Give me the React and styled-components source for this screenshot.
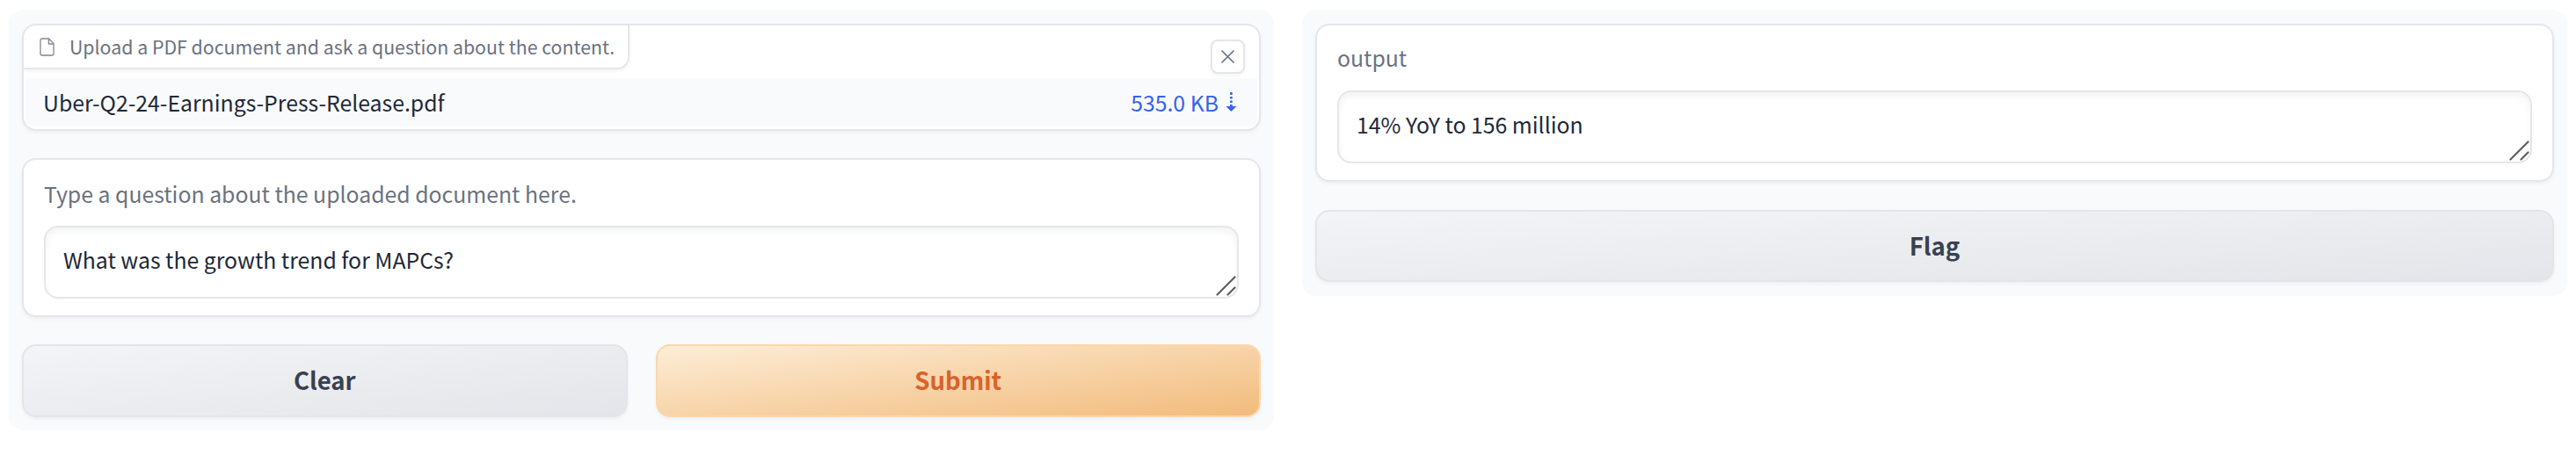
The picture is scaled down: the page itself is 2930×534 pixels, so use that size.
import React from "react";
import styled, { createGlobalStyle, css } from "styled-components";

const colors = {
  panel: "#f9fafc",
  border: "#e5e6eb",
  muted: "#6b7280",
  text: "#1f2937",
  link: "#3563e9",
};

const GlobalStyle = createGlobalStyle`
  *, *::before, *::after { box-sizing: border-box; }
  body {
    margin: 0;
    background: #fff;
    font-family: "Noto Sans CJK SC", "Noto Sans", sans-serif;
    color: ${colors.text};
  }
`;

const Page = styled.main`
  display: flex;
  align-items: flex-start;
  gap: 32px;
  padding: 11px 10px 0;
`;

const Panel = styled.section`
  flex: 1 1 0;
  display: flex;
  flex-direction: column;
  padding: 16px 15px ${(p) => p.$bottom}px;
  border-radius: 16px;
  background: ${colors.panel};
`;

const Card = styled.div`
  overflow: hidden;
  border: 2px solid ${colors.border};
  border-radius: 16px;
  background: #fff;
  box-shadow: 0 2px 4px rgba(0, 0, 0, 0.05);
`;

const FileCard = styled(Card)`
  height: 122px;
  margin-bottom: 31px;
`;

const FileHeader = styled.div`
  display: flex;
  justify-content: space-between;
  align-items: flex-start;
  height: 60px;
  padding-right: 16px;
`;

const FileLabel = styled.div`
  display: flex;
  align-items: center;
  height: 50px;
  padding: 0 15px 0 18px;
  gap: 17px;
  border: solid ${colors.border};
  border-width: 0 2px 2px 0;
  border-radius: 0 0 14px 0;
  box-shadow: 0 2px 4px rgba(0, 0, 0, 0.05);
  color: ${colors.muted};
  font-size: 21.3px;
  line-height: 32px;
  white-space: nowrap;
`;

const CloseButton = styled.button`
  display: grid;
  place-items: center;
  width: 39px;
  height: 39px;
  margin-top: 16px;
  padding: 0 0 1px;
  border: 2px solid ${colors.border};
  border-radius: 8px;
  background: #fff;
  box-shadow: 0 2px 4px rgba(0, 0, 0, 0.05);
  color: ${colors.muted};
`;

const FileRow = styled.div`
  display: flex;
  justify-content: space-between;
  align-items: center;
  height: 55px;
  margin: 0 2px;
  padding: 0 23px 2px 20px;
  background: ${colors.panel};
  font-size: 24.8px;
  line-height: 36px;
`;

const Download = styled.a`
  display: flex;
  align-items: center;
  gap: 8px;
  color: ${colors.link};
`;

const FieldCard = styled(Card)`
  padding: ${(p) => p.$top}px 23px 19px;
  margin-bottom: ${(p) => p.$gap}px;
`;

const FieldLabel = styled.label`
  display: block;
  margin-bottom: ${(p) => p.$space}px;
  color: ${colors.muted};
  font-size: 24.8px;
  line-height: 36px;
`;

const TextBox = styled.div`
  display: flex;
  justify-content: space-between;
  height: 83px;
  padding: 18px 1px 1px 20px;
  border: 2px solid ${colors.border};
  border-radius: 16px;
  background: #fff;
  box-shadow: inset 0 4px 8px rgba(0, 0, 0, 0.05);
  font-size: 24.8px;
  line-height: 36px;
`;

const Grip = styled.svg`
  align-self: flex-end;
  flex: none;
`;

const ButtonRow = styled.div`
  display: flex;
  gap: 32px;
`;

const primary = css`
  border-color: #fad7ab;
  background: linear-gradient(to bottom right, #fdeed8, #f2ba7a) border-box;
  color: #d9622b;
`;

const secondary = css`
  border-color: #e4e5e9;
  background: linear-gradient(to bottom right, #f3f4f6, #e4e5ea);
  color: #374151;
`;

const Button = styled.button`
  flex: 1 1 0;
  height: ${(p) => p.$height || 83}px;
  padding: 0 0 3px;
  border: 2px solid;
  border-radius: 16px;
  box-shadow: 0 2px 4px rgba(0, 0, 0, 0.05);
  font-family: inherit;
  font-size: 27.5px;
  font-weight: 700;
  line-height: 40px;
  ${(p) => (p.$primary ? primary : secondary)}
`;

function FileIcon() {
  return (
    <svg width="17" height="21" viewBox="0 0 17 21" fill="none" stroke="currentColor" strokeWidth="1.3" strokeLinejoin="round" opacity="0.85">
      <path d="M10.6 1H2.6A1.7 1.7 0 0 0 1 2.7v15.6A1.7 1.7 0 0 0 2.6 20h11.8a1.7 1.7 0 0 0 1.6-1.7V6.6z" />
      <path d="M10.4 1v6H16" />
    </svg>
  );
}

function CloseIcon() {
  return (
    <svg width="15" height="15" viewBox="0 0 15 15" stroke="currentColor" strokeWidth="1.7" strokeLinecap="round">
      <path d="M1 1l13 13M14 1L1 14" />
    </svg>
  );
}

function DownloadIcon() {
  return (
    <svg width="13" height="22" viewBox="0 0 13 22" fill="currentColor">
      <path d="M5.1 0h2.6v3H5.1zM5.1 5h2.6v2.6H5.1zM5.1 9.5h2.6v2.6H5.1zM5.1 14h2.6v2H12.4L6.4 22 .4 16h4.7z" />
    </svg>
  );
}

function ResizeGrip() {
  return (
    <Grip width="23" height="23" viewBox="0 0 23 23" stroke="#5f5f5f" strokeWidth="2.2" strokeLinecap="round">
      <path d="M1.5 21.5l20-20M13.5 21.5l8-8" />
    </Grip>
  );
}

function Field({ label, value, top, space, gap }) {
  return (
    <FieldCard $top={top} $gap={gap}>
      <FieldLabel $space={space}>{label}</FieldLabel>
      <TextBox>
        <span>{value}</span>
        <ResizeGrip />
      </TextBox>
    </FieldCard>
  );
}

export default function App() {
  return (
    <>
      <GlobalStyle />
      <Page>
        <Panel $bottom={15}>
          <FileCard>
            <FileHeader>
              <FileLabel>
                <FileIcon />
                <span>Upload a PDF document and ask a question about the content.</span>
              </FileLabel>
              <CloseButton aria-label="Clear file">
                <CloseIcon />
              </CloseButton>
            </FileHeader>
            <FileRow>
              <span>Uber-Q2-24-Earnings-Press-Release.pdf</span>
              <Download>
                <span>535.0 KB</span>
                <DownloadIcon />
              </Download>
            </FileRow>
          </FileCard>
          <Field
            label="Type a question about the uploaded document here."
            value="What was the growth trend for MAPCs?"
            top={20}
            space={19}
            gap={31}
          />
          <ButtonRow>
            <Button>Clear</Button>
            <Button $primary>Submit</Button>
          </ButtonRow>
        </Panel>
        <Panel $bottom={16}>
          <Field label="output" value="14% YoY to 156 million" top={18} space={20} gap={32} />
          <ButtonRow>
            <Button $height={82}>Flag</Button>
          </ButtonRow>
        </Panel>
      </Page>
    </>
  );
}
